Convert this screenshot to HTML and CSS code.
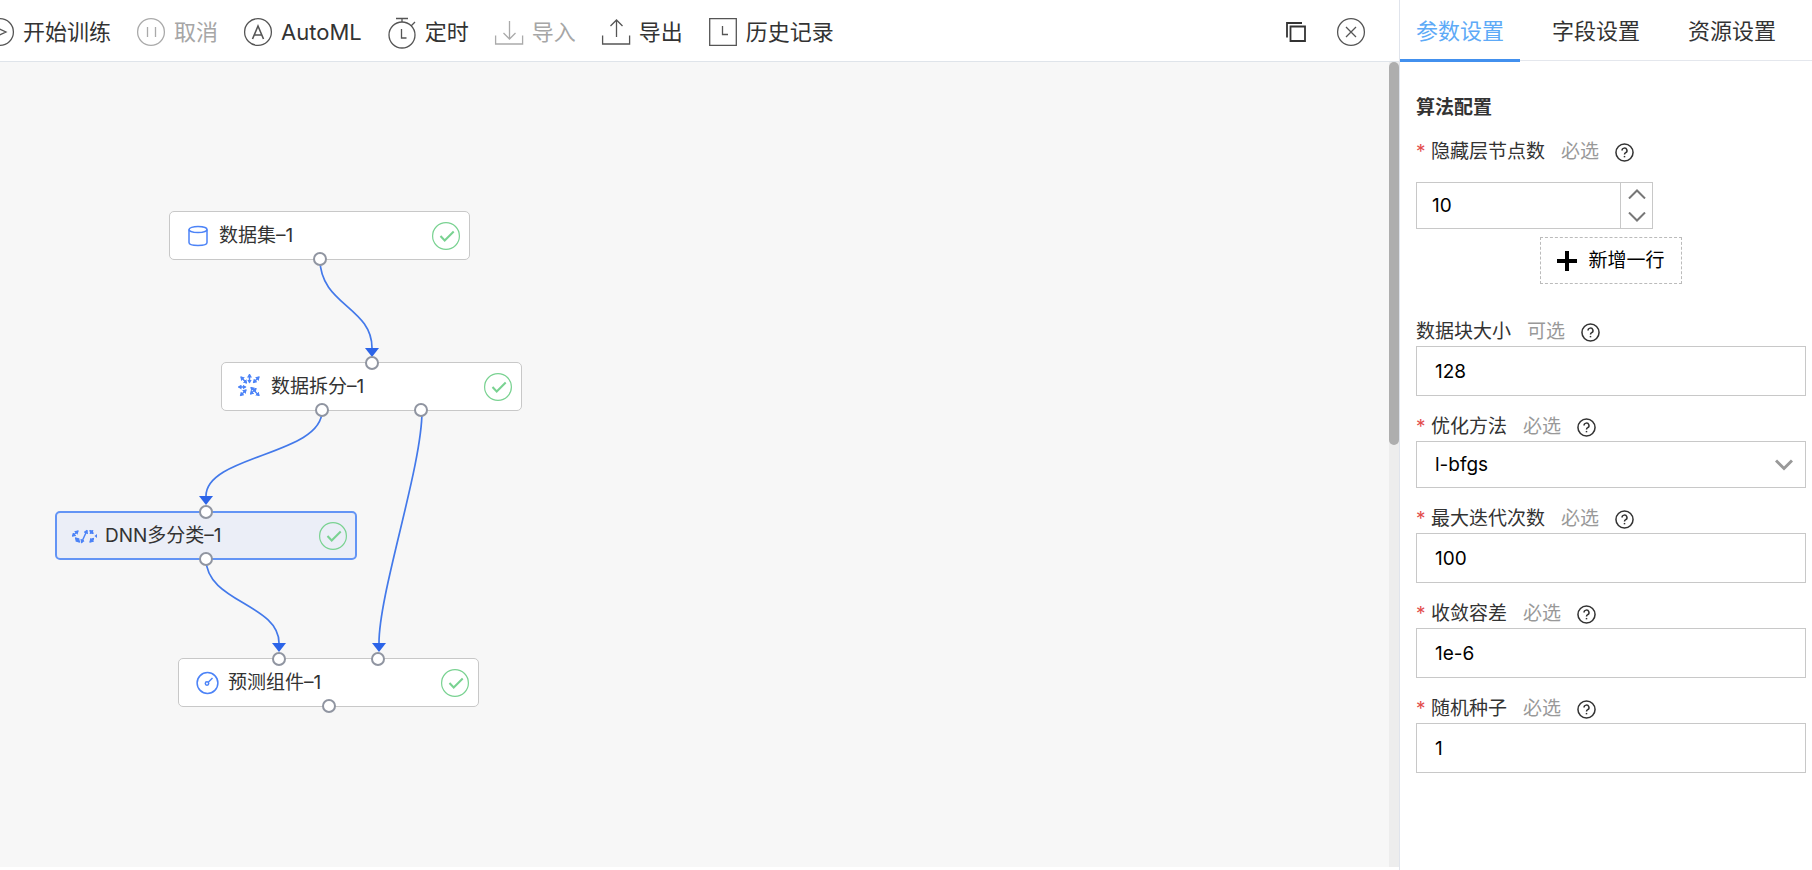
FILE: index.html
```html
<!DOCTYPE html>
<html lang="zh-CN">
<head>
    <meta charset="UTF-8">
    <meta name="viewport" content="width=device-width, initial-scale=1.0">
    <title>模型训练</title>
    <link rel="stylesheet" href="styles.css">
</head>
<body>
    <!-- Shared icons -->
    <svg class="sprite" aria-hidden="true">
        <symbol id="icon-help" viewBox="0 0 20 20">
            <circle cx="10" cy="10" r="9" />
            <path d="M7.4 8a2.6 2.6 0 1 1 3.9 2.2c-.9.5-1.3.9-1.3 1.9" />
            <path d="M10 13.6v1.5" />
        </symbol>
        <symbol id="icon-done" viewBox="0 0 28 28">
            <circle cx="14" cy="14" r="13.4" stroke-width="1.2" />
            <path d="M8.5 14l4.2 4.5 9-9" stroke-width="2" />
        </symbol>
        <marker id="tip" viewBox="0 0 4 5" refX="3" refY="2.5" markerWidth="4" markerHeight="5" markerUnits="userSpaceOnUse" orient="auto-start-reverse">
            <path d="M0 0l4 2.500-4 2.500z" />
        </marker>
    </svg>

    <!-- Workspace -->
    <main class="workspace">
        <header class="toolbar">
            <button class="tool" type="button">
                <svg class="tool-icon" viewBox="0 0 28 28"><circle cx="14" cy="14" r="13.4" /><path d="M10.500 9.500l9.500 4.500-9.500 4.500z" /></svg>
                开始训练
            </button>
            <button class="tool" type="button" disabled>
                <svg class="tool-icon" viewBox="0 0 28 28"><circle cx="14" cy="14" r="13.4" /><path d="M10.500 9v10M18.500 9v10" /></svg>
                取消
            </button>
            <button class="tool" type="button">
                <svg class="tool-icon" viewBox="0 0 28 28"><circle cx="14" cy="14" r="13.4" /><path d="M8.500 21l5.500-13 5.500 13M10.500 17h7" stroke-width="1.600" /></svg>
                AutoML
            </button>
            <button class="tool" type="button">
                <svg class="tool-icon" viewBox="0 0 28 28"><circle cx="14" cy="17" r="13" /><path d="M8 .5h12M14 .5v3.500M23 8l4-4M13.500 11v9h5" /></svg>
                定时
            </button>
            <button class="tool" type="button" disabled>
                <svg class="tool-icon" viewBox="0 0 28 28"><path d="M.6 17.500v8.500h27v-8.500M14.500 3v18M8.500 15l6 6 6-6" /></svg>
                导入
            </button>
            <button class="tool" type="button">
                <svg class="tool-icon" viewBox="0 0 28 28"><path d="M.6 17.500v8.500h27v-8.500M14.500 19v-17M8.500 8l6-6 6 6" /></svg>
                导出
            </button>
            <button class="tool" type="button">
                <svg class="tool-icon" viewBox="0 0 28 28"><path d="M.7.7h26.600v26.600h-26.600zM13.500 8v8.500h5.500" /></svg>
                历史记录
            </button>
            <div class="window-tools">
                <button class="tool" type="button" aria-label="复制">
                    <svg class="copy-icon" viewBox="0 0 20 20"><path d="M4.500 4.500h14.500v14.500h-14.500z" /><path d="M1 15.500v-14.500h15" /></svg>
                </button>
                <button class="tool" type="button" aria-label="关闭">
                    <svg class="tool-icon" viewBox="0 0 28 28"><circle cx="14" cy="14" r="13.4" /><path d="M9 9l10 10M19 9l-10 10" /></svg>
                </button>
            </div>
        </header>

        <div class="canvas">
            <svg class="edges" aria-hidden="true">
                <defs>
                    <marker id="arrow" viewBox="0 0 14 9" refX="7" refY="0" markerWidth="14" markerHeight="9" markerUnits="userSpaceOnUse">
                        <path d="M0 0h14l-7 9z" />
                    </marker>
                </defs>
                <path class="edge" d="M320 197C320 243 372 245 372 286" marker-end="url(#arrow)" />
                <path class="edge" d="M322 349C322 393 206 393 206 434" marker-end="url(#arrow)" />
                <path class="edge" d="M422 349C422 405 379 530 379 581" marker-end="url(#arrow)" />
                <path class="edge" d="M206 497C206 540 279 542 279 581" marker-end="url(#arrow)" />
            </svg>

            <div class="node node-dataset">
                <svg class="node-icon" viewBox="0 0 28 28"><ellipse cx="14" cy="7.500" rx="9" ry="3" /><path d="M5 7.500v13c0 4 18 4 18 0v-13" /></svg>
                <span>数据集–1</span>
                <svg class="done"><use href="#icon-done" /></svg>
                <i class="port bottom"></i>
            </div>
            <div class="node node-split">
                <svg class="node-icon arrows" viewBox="0 0 28 28">
                    <path d="M13.500 1.500v8" />
                    <path d="M17.500 9.500l5.500-5.500" />
                    <path d="M5 4l5.500 6" />
                    <path d="M2.500 14h7" />
                    <path d="M10 17l-5.500 5.500" />
                    <path d="M15 14.500l8 8" />
                    <path d="M20 15.500l-5.500 5.500" />
                </svg>
                <span>数据拆分–1</span>
                <svg class="done"><use href="#icon-done" /></svg>
                <i class="port top"></i>
                <i class="port bottom third"></i>
                <i class="port bottom two-thirds"></i>
            </div>
            <div class="node node-dnn selected">
                <svg class="node-icon arrows" viewBox="0 0 28 28">
                    <path d="M2.500 14l5.500-5" />
                    <path d="M5.500 16l4 4" />
                    <path d="M11.500 20.500l5.500-12" />
                    <path d="M20 8.500l3 3" />
                    <path d="M20 20l3.500-3.500" />
                    <path class="arrow-dot" d="M27 12v4l-2.500-2z" />
                </svg>
                <span>DNN多分类–1</span>
                <svg class="done"><use href="#icon-done" /></svg>
                <i class="port top"></i>
                <i class="port bottom"></i>
            </div>
            <div class="node node-predict">
                <svg class="node-icon" viewBox="0 0 28 28"><circle cx="14.500" cy="14" r="10.400" /><circle cx="14" cy="14.500" r="1.700" /><path d="M15.500 13l4-4" /></svg>
                <span>预测组件–1</span>
                <svg class="done"><use href="#icon-done" /></svg>
                <i class="port top third"></i>
                <i class="port top two-thirds"></i>
                <i class="port bottom"></i>
            </div>

            <div class="scrollbar"><div class="scrollbar-thumb"></div></div>
        </div>
    </main>

    <!-- Settings panel -->
    <aside class="panel">
        <nav class="tabs">
            <a class="tab active" href="#params">参数设置</a>
            <a class="tab" href="#fields">字段设置</a>
            <a class="tab" href="#resources">资源设置</a>
        </nav>

        <form class="form" id="params">
            <h2>算法配置</h2>
            <div class="field hidden-nodes">
                <div class="field-label">
                    <label class="required" for="hidden-size">隐藏层节点数</label>
                    <span class="hint">必选</span>
                    <svg class="help"><use href="#icon-help" /></svg>
                </div>
                <div class="stepper">
                    <input type="text" id="hidden-size" value="10">
                    <div class="stepper-buttons">
                        <button type="button" aria-label="增加"><svg viewBox="0 0 18 10"><path d="M1 9.500l8-8 8 8" /></svg></button>
                        <button type="button" aria-label="减少"><svg viewBox="0 0 18 10"><path d="M1 .5l8 8 8-8" /></svg></button>
                    </div>
                </div>
                <button class="add-row" type="button">
                    <svg viewBox="0 0 20 20"><path d="M10 0v20M0 10h20" /></svg>
                    新增一行
                </button>
            </div>
            <div class="field">
                <div class="field-label">
                    <label for="block-size">数据块大小</label>
                    <span class="hint">可选</span>
                    <svg class="help"><use href="#icon-help" /></svg>
                </div>
                <input type="text" id="block-size" value="128">
            </div>
            <div class="field">
                <div class="field-label">
                    <label class="required" for="solver">优化方法</label>
                    <span class="hint">必选</span>
                    <svg class="help"><use href="#icon-help" /></svg>
                </div>
                <div class="select">
                    <select id="solver">
                        <option>l-bfgs</option>
                    </select>
                    <svg class="chevron" viewBox="0 0 18 12"><path d="M1 1.500l8 8 8-8" /></svg>
                </div>
            </div>
            <div class="field">
                <div class="field-label">
                    <label class="required" for="max-iter">最大迭代次数</label>
                    <span class="hint">必选</span>
                    <svg class="help"><use href="#icon-help" /></svg>
                </div>
                <input type="text" id="max-iter" value="100">
            </div>
            <div class="field">
                <div class="field-label">
                    <label class="required" for="tolerance">收敛容差</label>
                    <span class="hint">必选</span>
                    <svg class="help"><use href="#icon-help" /></svg>
                </div>
                <input type="text" id="tolerance" value="1e-6">
            </div>
            <div class="field">
                <div class="field-label">
                    <label class="required" for="seed">随机种子</label>
                    <span class="hint">必选</span>
                    <svg class="help"><use href="#icon-help" /></svg>
                </div>
                <input type="text" id="seed" value="1">
            </div>
        </form>
    </aside>
</body>
</html>
```

FILE: styles.css
```css
/* Basic reset */
* {
    margin: 0;
    padding: 0;
    box-sizing: border-box;
}

body {
    display: flex;
    min-height: 100vh;
    font-family: Inter, "Noto Sans CJK SC", sans-serif;
    font-size: 19px;
    line-height: 28px;
    color: #333;
    background-color: #fff;
    overflow-x: hidden;
}

button,
input,
select {
    font: inherit;
    color: inherit;
    border: none;
    background: none;
}

button {
    cursor: pointer;
}

svg {
    flex: none;
    fill: none;
    stroke: currentColor;
}

.sprite {
    position: absolute;
    width: 0;
    height: 0;
}

/* Workspace */
.workspace {
    flex: 1;
    min-width: 0;
    display: flex;
    flex-direction: column;
    padding-bottom: 3px;
    border-right: 1px solid #e0e4ec;
}

/* Toolbar */
.toolbar {
    display: flex;
    align-items: center;
    gap: 26px;
    height: 62px;
    padding-top: 3px;
    padding-right: 34px;
    margin-left: -14px; /* first tool is scrolled partly out of view */
    border-bottom: 1px solid #dfe4ea;
    white-space: nowrap;
}

.tool {
    display: flex;
    align-items: center;
    gap: 9px;
    font-size: 22px;
}

.tool:disabled {
    color: #a6a6a6;
    cursor: default;
}

.tool-icon {
    width: 28px;
    height: 28px;
    overflow: visible;
    color: #555;
    stroke-width: 1.3;
}

.tool:disabled .tool-icon {
    color: #aaa;
}

.copy-icon {
    width: 20px;
    height: 20px;
    stroke-width: 1.8;
}

.window-tools {
    display: flex;
    align-items: center;
    gap: 31px;
    margin-left: auto;
}

/* Canvas */
.canvas {
    position: relative;
    flex: 1;
    min-height: 700px;
    background-color: #f7f7f7;
    overflow: hidden;
}

.edges {
    position: absolute;
    width: 100%;
    height: 100%;
}

.edge {
    stroke: #4379ea;
    stroke-width: 1.7;
}

#arrow path {
    fill: #2c64e8;
    stroke: none;
}

/* Nodes */
.node {
    position: absolute;
    display: flex;
    align-items: center;
    gap: 7px;
    width: 301px;
    height: 49px;
    padding: 0 9px 0 14px;
    border: 1px solid #c8c8c8;
    border-radius: 5px;
    background-color: #fff;
}

.node.selected {
    width: 302px;
    border: 2px solid #6394f5;
    padding: 0 8px 0 13px;
    background-color: #ebeef7;
}

.node-dataset {
    left: 169px;
    top: 149px;
}

.node-split {
    left: 221px;
    top: 300px;
}

.node-dnn {
    left: 55px;
    top: 449px;
}

.node-predict {
    left: 178px;
    top: 596px;
}

.node-icon {
    width: 28px;
    height: 28px;
    color: #4c83f7;
    stroke-width: 1.5;
}

.arrows path {
    marker-start: url(#tip);
    marker-end: url(#tip);
}

.arrows .arrow-dot {
    marker: none;
    fill: #4c83f7;
    stroke: none;
}

#tip path {
    marker: none;
    fill: #4c83f7;
    stroke: none;
}

.done {
    width: 28px;
    height: 28px;
    margin-left: auto;
    color: #79d291;
}

.port {
    position: absolute;
    left: 50%;
    width: 14px;
    height: 14px;
    margin-left: -7px;
    border: 2px solid #9095a1;
    border-radius: 50%;
    background-color: #fff;
}

.port.top {
    top: -7px;
}

.port.bottom {
    bottom: -7px;
}

.selected .port.top {
    top: -8px;
}

.selected .port.bottom {
    bottom: -8px;
}

.port.third {
    left: 33.33%;
}

.port.two-thirds {
    left: 66.67%;
}

/* Scrollbar */
.scrollbar {
    position: absolute;
    top: 0;
    right: 0;
    bottom: 0;
    width: 10px;
    background-color: #ededed;
}

.scrollbar-thumb {
    height: 383px;
    border-radius: 5px;
    background-color: #aeaeae;
}

/* Settings panel */
.panel {
    width: 412px;
}

.tabs {
    display: flex;
    gap: 16px;
    height: 61px;
    border-bottom: 1px solid #e4e7ed;
}

.tab {
    height: 62px;
    padding: 0 16px;
    font-size: 22px;
    line-height: 62px;
    color: #333;
    text-decoration: none;
    white-space: nowrap;
}

.tab.active {
    color: #5eaaf7;
    border-bottom: 3px solid #4290ee;
}

.form {
    padding: 33px 6px 32px 16px;
}

.form h2 {
    font-size: 19px;
    line-height: 28px;
}

/* Fields */
.field {
    margin-bottom: 17px;
}

.field-label {
    display: flex;
    align-items: center;
    gap: 16px;
    height: 28px;
}

.required::before {
    content: "*";
    display: inline-block;
    width: 15px;
    color: #e34d4d;
}

.hint {
    color: #999;
}

.help {
    width: 19px;
    height: 19px;
    stroke-width: 1.6;
}

.field input {
    display: block;
    width: 100%;
    height: 50px;
    padding: 0 18px;
    border: 1px solid #c8c8c8;
    font-size: 19px;
    color: #000;
}

.hidden-nodes {
    display: flex;
    flex-direction: column;
    padding-top: 16px;
    margin-bottom: 34px;
}

.stepper {
    display: flex;
    width: 237px;
    height: 47px;
    margin-top: 16px;
    border: 1px solid #c8c8c8;
}

.field .stepper input {
    flex: 1;
    min-width: 0;
    height: 45px;
    padding: 0 15px;
    border: none;
}

.stepper-buttons {
    display: flex;
    flex-direction: column;
    width: 32px;
    border-left: 1px solid #c8c8c8;
}

.stepper-buttons button {
    flex: 1;
    display: flex;
    align-items: center;
    justify-content: center;
    color: #777;
}

.stepper-buttons svg {
    width: 18px;
    height: 10px;
    stroke-width: 2;
}

.add-row {
    display: flex;
    align-items: center;
    justify-content: center;
    align-self: center;
    gap: 11px;
    width: 142px;
    height: 47px;
    margin-top: 8px;
    border: 1px dashed #bbb;
    color: #000;
}

.add-row svg {
    width: 20px;
    height: 20px;
    stroke-width: 4;
}

/* Select */
.select {
    position: relative;
}

.select select {
    display: block;
    width: 100%;
    height: 47px;
    padding: 0 18px;
    border: 1px solid #c8c8c8;
    font-size: 19px;
    color: #000;
    appearance: none;
}

.chevron {
    position: absolute;
    top: 18px;
    right: 13px;
    width: 18px;
    height: 12px;
    color: #999;
    stroke-width: 3;
    pointer-events: none;
}
```
